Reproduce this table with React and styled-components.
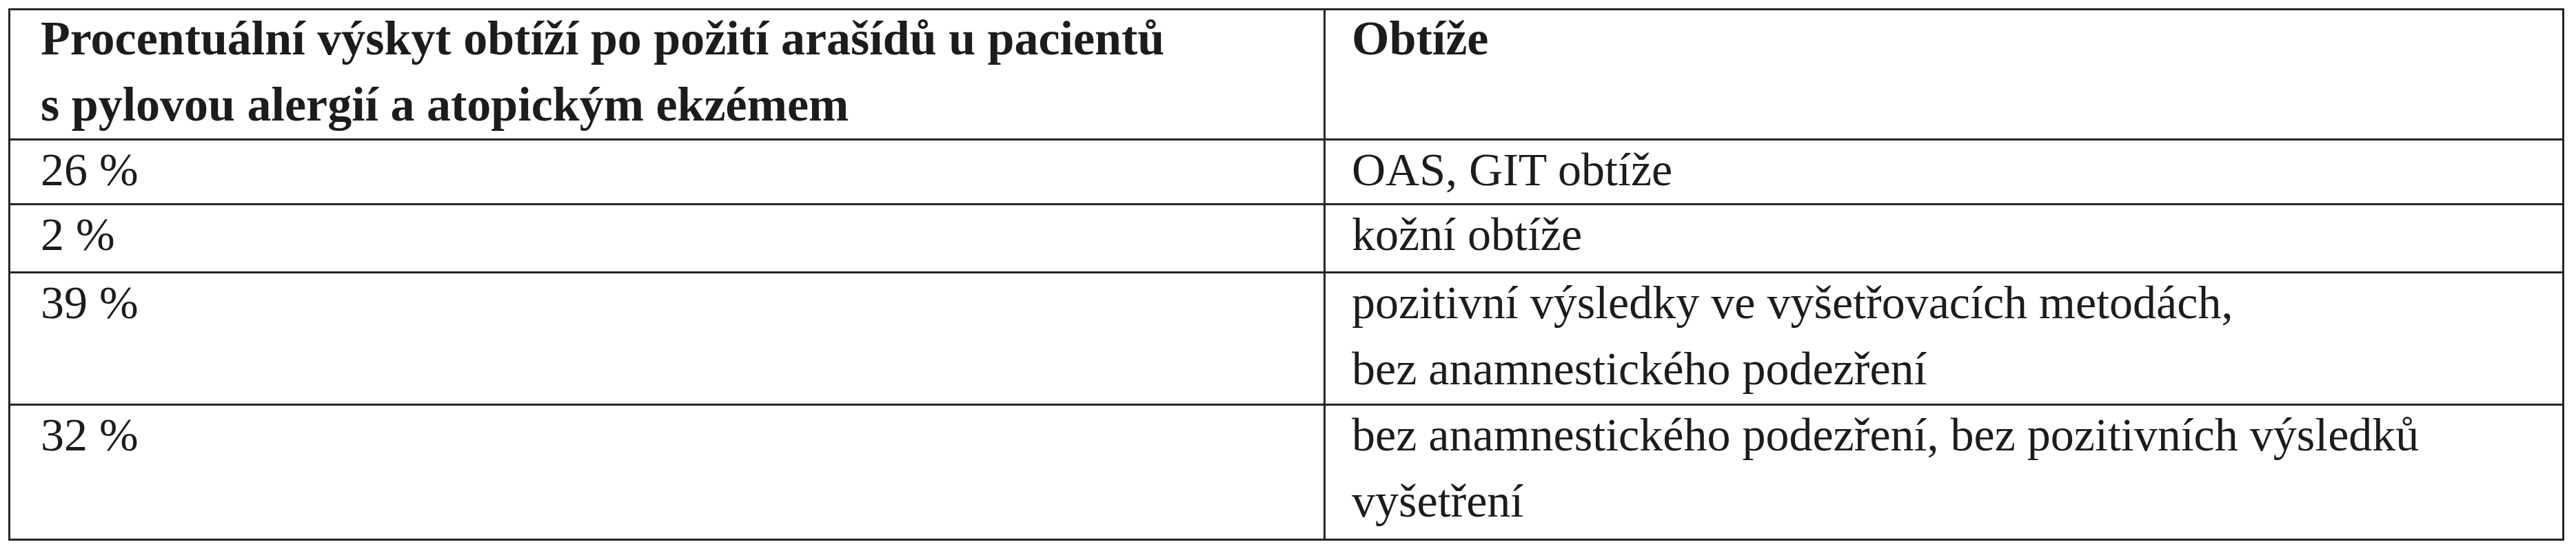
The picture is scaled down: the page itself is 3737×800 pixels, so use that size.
import React from 'react'
import styled, { createGlobalStyle } from 'styled-components'

const GlobalStyle = createGlobalStyle`
    html, body {
        margin: 0;
        padding: 0;
        background: #fff;
    }
    body {
        font-family: "Liberation Serif", "Times New Roman", serif;
        color: #1c1c1c;
    }
`

const Page = styled.div`
    padding: 12px 0 0 12px;
`

const Table = styled.table`
    border-collapse: collapse;
    width: 3708px;
    table-layout: fixed;
    border: 3px solid #262626;
    font-family: "Liberation Serif", "Times New Roman", serif;
    color: #1c1c1c;
`

const Row = styled.tr`
    border-top: 3px solid #262626;
`

const Cell = styled.td`
    padding: 0 0 ${props => props.$pad || 0}px ${props => (props.$first ? 44 : 38)}px;
    width: ${props => (props.$first ? '1861px' : 'auto')};
    border-left: ${props => (props.$first ? 'none' : '3px solid #262626')};
    vertical-align: top;
    font-family: "Liberation Serif", "Times New Roman", serif;
    font-size: ${props => (props.$head ? 70 : 68)}px;
    line-height: 96px;
    font-weight: ${props => (props.$head ? 700 : 400)};
`

const Text = styled.div`
    margin-top: ${props => (props.$head ? -7 : -6)}px;
`

const rows = [
    { pct: '26 %', text: ['OAS, GIT obtíže'], pad: 1 },
    { pct: '2 %', text: ['kožní obtíže'], pad: 6 },
    {
        pct: '39 %',
        text: ['pozitivní výsledky ve vyšetřovacích metodách,', 'bez anamnestického podezření'],
        pad: 3,
    },
    {
        pct: '32 %',
        text: ['bez anamnestického podezření, bez pozitivních výsledků', 'vyšetření'],
        pad: 7,
    },
]

const App = () => (
    <Page>
        <GlobalStyle />
        <Table>
            <tbody>
                <Row>
                    <Cell $first $head $pad={1}>
                        <Text $head>
                            Procentuální výskyt obtíží po požití arašídů u pacientů
                            <br />
                            s pylovou alergií a atopickým ekzémem
                        </Text>
                    </Cell>
                    <Cell $head $pad={1}>
                        <Text $head>Obtíže</Text>
                    </Cell>
                </Row>
                {rows.map(r => (
                    <Row key={r.pct}>
                        <Cell $first $pad={r.pad}>
                            <Text>{r.pct}</Text>
                        </Cell>
                        <Cell $pad={r.pad}>
                            <Text>
                                {r.text.map((line, i) => (
                                    <React.Fragment key={i}>
                                        {i > 0 && <br />}
                                        {line}
                                    </React.Fragment>
                                ))}
                            </Text>
                        </Cell>
                    </Row>
                ))}
            </tbody>
        </Table>
    </Page>
)

export default App
